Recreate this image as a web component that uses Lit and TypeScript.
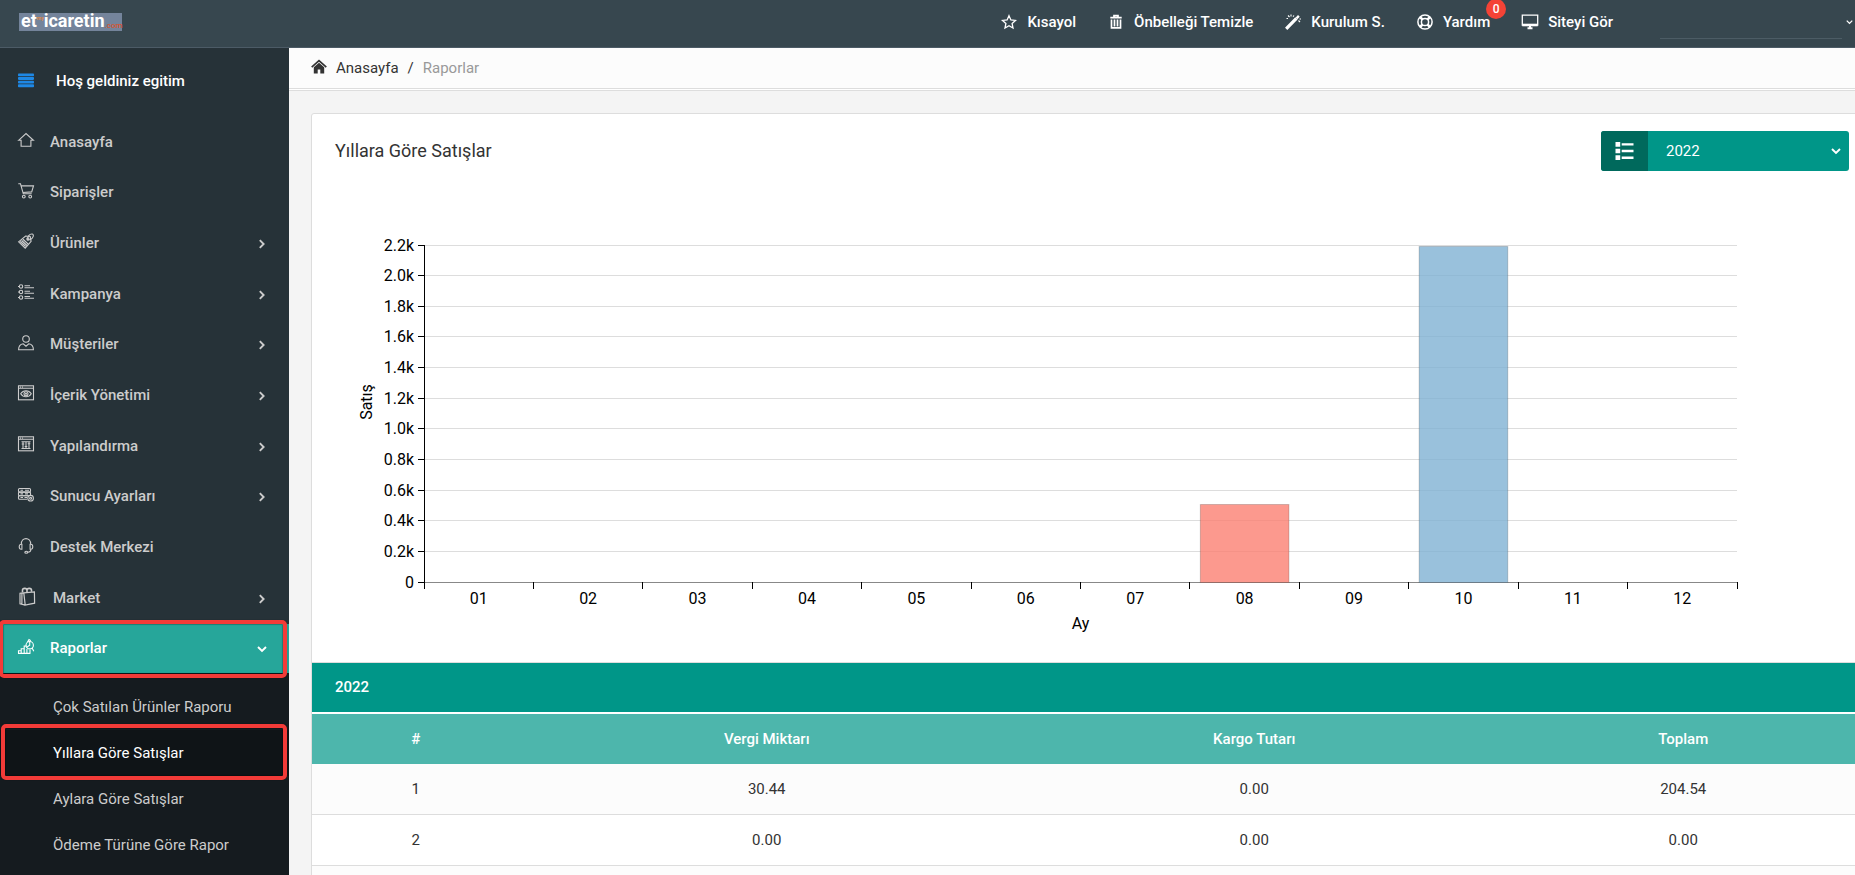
import { LitElement, html, svg, css, nothing, TemplateResult, SVGTemplateResult } from 'lit';
import { customElement, property } from 'lit/decorators.js';
import { classMap } from 'lit/directives/class-map.js';

const ICONS: Record<string, SVGTemplateResult> = {
  bars: svg`<g fill="currentColor" stroke="none"><rect y="1.4" width="16" height="2.900" rx=".8"/><rect y="5" width="16" height="2.900" rx=".8"/><rect y="8.700" width="16" height="2.900" rx=".8"/><rect y="12.300" width="16" height="2.900" rx=".8"/></g>`,
  home: svg`<path d="M.6 8.3 8 1.6l7.400 6.700h-2.500v5.900H3.100V8.300z"/>`,
  cart: svg`<path d="M.3.8h2.200l2.800 10h8.400M3.200 2.900h12.300l-1.800 6-8.900.6"/><circle cx="5.800" cy="13.600" r="1.400"/><circle cx="12.200" cy="13.600" r="1.400"/>`,
  tag: svg`<path d="M.6 8.900 7.600 3l4.600.5.9 4.800-5.900 6.900z"/><path d="m2.200 8.600 5.400 5M3.600 7.400l5.400 5M5 6.200l5.200 4.900" stroke-width="1.300"/><path d="M9.600 6.600c-.6-2.900 2-6 4.700-5.600 2.200.7.600 4.600-1.800 5.400-1.500.5-2.900.4-2.900.2z"/><circle cx="9.900" cy="6" r="1.100"/>`,
  list: svg`<circle cx="3" cy="2.500" r="1.700"/><circle cx="3" cy="8" r="1.700"/><circle cx="3" cy="13.500" r="1.700"/><path d="M0 2.500h1.200M0 8h1.200M0 13.500h1.200M6.500 1.800H12M6.500 3.800H16M6.500 7.200H12M6.500 9.200H16M6.500 12.500H12M6.500 14.200H16"/>`,
  user: svg`<circle cx="8" cy="4" r="3.300"/><path d="M.6 14.700c0-3.400 2-5.500 4.600-5.900L8 11.200l2.800-2.400c2.600.4 4.600 2.500 4.600 5.900z"/>`,
  eye: svg`<rect x=".5" y=".8" width="15" height="14"/><path d="M.5 3.300h15M2 2h1M4 2h1" /><path d="M2.700 8.800c2.600-4 8-4 10.600 0-2.600 4-8 4-10.600 0z"/><circle cx="8" cy="8.800" r="2"/><circle cx="8" cy="8.800" r=".5"/>`,
  sliders: svg`<rect x=".5" y=".8" width="15" height="14"/><path d="M.5 3.300h15M2 2h1M4 2h1M3.500 5.800h9M3.500 12.500h9M5 6v6.500M8 6v6.500M11 6v6.500M3.700 8h2.600M6.700 10.500h2.600M9.700 7.800h2.600"/>`,
  server: svg`<rect x=".5" y="1.500" width="12" height="3.600" rx="1"/><rect x=".5" y="5.100" width="12" height="3.600" rx="1"/><path d="M9 12.300H1.500a1 1 0 0 1-1-1V9.700a1 1 0 0 1 1-1H10M2.500 3.300H5M7 3.300h4M2.500 6.900H5M7 6.900h3M2.500 10.500H5M6.500 10.500H9"/><circle cx="12.600" cy="11.200" r="2.800"/><circle cx="12.600" cy="11.200" r="1"/>`,
  headset: svg`<path d="M3.300 6.200C3.300-1.300 12.700-1.300 12.700 6.200M3.900 6.300H3.100C.6 6.300.6 11.200 3.100 11.200h.8zM12.100 6.300h.8c2.500 0 2.500 4.900 0 4.900h-.8zM12.900 11.300c0 2-1.400 3-3.400 3"/><ellipse cx="8.300" cy="14.300" rx="1.500" ry="1"/>`,
  bag: svg`<path d="M4.800 4.300 15.400 3.500l.2 11.200-9.400 1.900zM4.800 4.300 1 4.700v10.600l5.200 1.300M2.900 4.600v11" stroke-width="1.200"/><path d="M3.500 4V1.700C3.500-.8 8-.8 8 1.700v2M8 1.700C8-.8 12.500-.8 12.500 1.700v1.600" stroke-width="1.600"/>`,
  chart: svg`<path d="M.5 14.400v-2.600h2.700M3.200 14.400V9.700h3M6.200 14.400V7h2.500M8.900 14.400V9.900M12 14.400v-3.600M0 14.400h12.400"/><circle cx="11.700" cy="6.200" r="3.700"/><path d="M11.700 2.500v3.700l-3 2M14.100 9l1.700 3.300M9.500 3 11 .6l1.800 1.200"/>`,
  star: svg`<path d="m8 1.700 1.900 4.200 4.600.5-3.400 3.100.9 4.500L8 11.700 4 14l.9-4.500L1.500 6.400l4.600-.5z" stroke-width="1.300"/>`,
  trash: svg`<path d="M2.300 3.600h11.400M6 3.300V1.700h4v1.600" stroke-width="1.700"/><path d="M3.500 5.500v8.300h9V5.500M6.500 5.500v7M9.500 5.500v7" stroke-width="1.700"/>`,
  wand: svg`<path d="m2.300 13.700 8-8.200" stroke-width="3.200" stroke-linecap="square"/><path d="m11.500 4.300 2.400-2.500" stroke-width="2.400"/><path d="M3 1.500l1.500 1.500M6 .5v2M1.500 4.500h1.500M9 1.500 8 2.700M13.500 6.500l1.500 1.500M14.500 5H16" stroke-width="1.100"/>`,
  help: svg`<circle cx="8" cy="8" r="7.100" stroke-width="1.500"/><circle cx="8" cy="8" r="3.600" stroke-width="1.500"/><path d="m2.900 2.900 2.700 2.700M13.100 2.900l-2.700 2.700M2.900 13.100l2.700-2.700M13.100 13.100l-2.700-2.700" stroke-width="2.600"/>`,
  monitor: svg`<path d="M.3 1.200h15.400v10H.3z" stroke-width="1.300"/><path d="M.3 11h15.400" stroke-width="2.600"/><path d="M5.500 14.300h5M8 12v2.400" stroke-width="2"/>`,
  house: svg`<g fill="currentColor" stroke="none"><path d="M8 3.700 2.800 8.300v6.200h3.900v-3.900h2.600v3.900h3.900V8.300z"/></g><path d="M.7 8.200 8 1.700l7.300 6.500" stroke-width="1.700"/>`,
  rows: svg`<g fill="currentColor" stroke="none"><path d="M0 0h4.200v4.200H0zM0 5.900h4.200v4.200H0zM0 11.800h4.200V16H0zM5.500 1h10.500v2.200H5.500zM5.500 6.900h10.500v2.200H5.500zM5.500 12.800h10.500V15H5.500z"/></g>`,
  right: svg`<path d="m5.800 4.200 3.800 3.800-3.800 3.800" stroke-width="1.900"/>`,
  down: svg`<path d="M4 6 8 10l4-4" stroke-width="1.900"/>`,
};

@customElement('ui-icon')
class UiIcon extends LitElement {
  static styles = css`
    :host { display: block; flex: none; width: 16px; height: 16px; }
    svg { display: block; width: 100%; height: 100%; overflow: visible; }
  `;
  @property() name = '';
  render() {
    return html`<svg viewBox="0 0 16 16" fill="none" stroke="currentColor" stroke-width="1.1" aria-hidden="true">${ICONS[this.name]}</svg>`;
  }
}

interface Bar { month: string; value: number; tone: string }

@customElement('sales-chart')
class SalesChart extends LitElement {
  static styles = css`
    :host { display: block; padding: 57px 135px 79px 112px; }
    svg { display: block; width: 100%; height: 338px; overflow: visible; font: 16px Roboto, sans-serif; }
    .grid { stroke: #ddd; }
    .axis { stroke: #000; }
    .base { stroke: #888; }
    .lines { shape-rendering: crispEdges; }
    .end { text-anchor: end; }
    .mid { text-anchor: middle; }
    .bar { stroke: rgba(0, 0, 0, 0.18); fill-opacity: 0.8; }
    .red { fill: #fb8072; }
    .blue { fill: #80b1d3; }
  `;
  @property({ attribute: false }) bars: Bar[] = [];

  render() {
    const max = 2200;
    const height = 337;
    const n = this.bars.length;
    const ticks = Array.from({ length: 12 }, (_, i) => i * 200);
    const y = (v: number) => Math.floor(height - (v / max) * height) + 0.5;
    const x = (i: number) => `${(i / n) * 100}%`;
    return html`<svg role="img" aria-label="Yıllara Göre Satışlar">
      <g class="lines">
        ${ticks.map((t) => svg`<line class="grid" x1="0" x2="100%" y1=${y(t)} y2=${y(t)} />
          <line class="axis" x1="-6" x2="0" y1=${y(t)} y2=${y(t)} />`)}
        <line class="base" x1="0" x2="100%" y1=${y(0)} y2=${y(0)} />
        <line class="axis" x1="0.5" x2="0.5" y1="0" y2=${height} />
        ${Array.from({ length: n + 1 }, (_, i) => svg`<line class="axis" x1=${x(i)} x2=${x(i)} y1=${height} y2=${height + 7} />`)}
      </g>
      ${this.bars.map((b, i) => svg`
        ${b.value ? svg`<rect class="bar ${b.tone}" x=${x(i + 0.095)} width=${x(0.81)} y=${y(b.value)} height=${height + 0.5 - y(b.value)} />` : nothing}
        <text class="mid" x=${x(i + 0.5)} y=${height + 22}>${b.month}</text>`)}
      ${ticks.map((t) => svg`<text class="end" x="-10" y=${y(t) + 5}>${t ? (t / 1000).toFixed(1) + 'k' : '0'}</text>`)}
      <text class="mid" x="50%" y="384">Ay</text>
      <text class="mid" transform="translate(-52 157) rotate(-90)">Satış</text>
    </svg>`;
  }
}

const MENU = [
  { icon: 'home', label: 'Anasayfa' },
  { icon: 'cart', label: 'Siparişler' },
  { icon: 'tag', label: 'Ürünler', more: true },
  { icon: 'list', label: 'Kampanya', more: true },
  { icon: 'user', label: 'Müşteriler', more: true },
  { icon: 'eye', label: 'İçerik Yönetimi', more: true },
  { icon: 'sliders', label: 'Yapılandırma', more: true },
  { icon: 'server', label: 'Sunucu Ayarları', more: true },
  { icon: 'headset', label: 'Destek Merkezi' },
  { icon: 'bag', label: 'Market', more: true },
  { icon: 'chart', label: 'Raporlar', more: true, open: true },
];
const REPORTS = ['Çok Satılan Ürünler Raporu', 'Yıllara Göre Satışlar', 'Aylara Göre Satışlar', 'Ödeme Türüne Göre Rapor'];
const ACTIVE_REPORT = 1;
const ACTIONS = [
  { icon: 'star', label: 'Kısayol' },
  { icon: 'trash', label: 'Önbelleği Temizle' },
  { icon: 'wand', label: 'Kurulum S.' },
  { icon: 'help', label: 'Yardım', badge: '0' },
  { icon: 'monitor', label: 'Siteyi Gör' },
];
const BARS: Bar[] = Array.from({ length: 12 }, (_, i) => ({
  month: String(i + 1).padStart(2, '0'),
  value: i === 7 ? 504 : i === 9 ? 2192 : 0,
  tone: i === 7 ? 'red' : 'blue',
}));
const COLUMNS = ['#', 'Vergi Miktarı', 'Kargo Tutarı', 'Toplam'];
const ROWS = [
  ['1', '30.44', '0.00', '204.54'],
  ['2', '0.00', '0.00', '0.00'],
  ['', '', '', ''],
];

@customElement('app-root')
class AppRoot extends LitElement {
  static styles = css`
    :host {
      display: grid;
      grid-template: 48px minmax(0, 1fr) / 289px minmax(0, 1fr);
      height: 100vh;
      overflow: hidden;
      font: 15px/20px Roboto, sans-serif;
      color: #333;
      background: #f4f4f4;
    }
    *, *::before { box-sizing: border-box; }
    a { color: inherit; text-decoration: none; }
    ul { list-style: none; margin: 0; padding: 0; }
    select { appearance: none; border: 0; outline: 0; font: inherit; color: inherit; background: none; }

    .top {
      grid-column: 1 / -1;
      display: flex;
      align-items: center;
      padding-left: 19px;
      color: #fff;
      background: #37474f;
      border-bottom: 1px solid #4c5b66;
    }
    .logo {
      display: flex;
      align-items: flex-end;
      width: 103px;
      height: 18px;
      padding-left: 2px;
      margin-bottom: 3px;
      background: #74849b;
      font-size: 18px;
      font-weight: 700;
      line-height: 20px;
    }
    .logo sup { align-self: flex-start; padding-top: 1px; font-size: 5px; line-height: 8px; color: #e08a4a; }
    .logo small { font-size: 8px; font-weight: 500; line-height: 10px; color: #d9532c; }
    .actions { display: flex; gap: 32px; margin: 0 47px 3px auto; font-weight: 500; }
    .action { display: flex; align-items: center; gap: 10px; position: relative; }
    .badge {
      position: absolute;
      right: -16px;
      top: -13px;
      width: 20px;
      height: 20px;
      border-radius: 50%;
      background: #f44336;
      font-size: 12px;
      text-align: center;
    }
    .account { display: flex; align-items: center; gap: 2px; margin-bottom: 3px; }
    .account select { width: 182px; height: 33px; border-bottom: 1px solid #4c5c65; }
    .account ui-icon { width: 11px; }

    .side { background: #263238; color: #ccc; font-weight: 500; }
    .welcome { display: flex; align-items: center; gap: 22px; height: 66px; padding-left: 18px; color: #fff; }
    .welcome ui-icon { color: #1e88e5; margin-bottom: 3px; }
    .menu { display: flex; flex-direction: column; justify-content: space-between; height: 556px; margin-top: 3px; }
    .item { display: flex; align-items: center; gap: 16px; height: 49px; padding: 0 19px 0 18px; }
    .item ui-icon { margin-bottom: 3px; }
    .item .arrow { margin: 2px 0 0 auto; }
    .item.wide { gap: 18px; padding-left: 19px; }
    .item.wide ui-icon:first-child { height: 17px; }
    .open { position: relative; background: #26a69a; color: #fff; }
    .sub { height: 100%; padding-top: 11px; background: #151b1f; font-weight: 400; }
    .sub a { display: flex; align-items: center; height: 46px; padding-left: 53px; }
    .sub .active { position: relative; background: #0f1417; color: #fff; }
    .open::before, .active::before {
      content: '';
      position: absolute;
      inset: -4px 2px -5px 0;
      border: 4px solid #f33b38;
      border-radius: 5px;
      box-shadow: inset 0 0 1px 1px rgba(0, 0, 0, 0.25), 0 0 1px rgba(0, 0, 0, 0.5);
    }
    .open::before { left: -1px; }
    .active::before { inset: -6px 2px -4px 1px; }

    .crumbs {
      display: flex;
      align-items: center;
      gap: 9px;
      height: 41px;
      padding-left: 22px;
      background: #fcfcfc;
      border-bottom: 1px solid #ddd;
      box-shadow: 0 1px #fff, 0 2px #ddd;
    }
    .crumbs ui-icon { margin-bottom: 3px; }
    .crumbs .here { color: #999; }

    .main { overflow: hidden; }
    .panel { margin: 24px -18px 0 22px; background: #fff; border: 1px solid #ddd; border-radius: 3px; }
    .head { display: flex; align-items: center; justify-content: space-between; padding: 17px 23px; }
    h1 { margin: 0; font-size: 18px; font-weight: 400; line-height: 24px; }
    .year { display: flex; align-items: center; height: 40px; border-radius: 3px; overflow: hidden; background: #009688; color: #fff; position: relative; }
    .year .mark { display: grid; place-items: center; width: 47px; height: 100%; background: #00695c; }
    .year .mark ui-icon { width: 19px; height: 18px; }
    .year select { width: 201px; height: 100%; padding: 0 18px; }
    .year .arrow { position: absolute; right: 5px; pointer-events: none; }

    table { width: 100%; table-layout: fixed; border-spacing: 0; border-top: 1px solid #ddd; text-align: center; }
    th { padding: 0; font-weight: 500; color: #fff; background: #4db6ac; height: 50px; }
    th.title { height: 51px; padding: 0 0 2px 23px; text-align: left; background: #009688; border-bottom: 2px solid #fff; }
    td { padding: 0; height: 51px; border-bottom: 1px solid #ddd; }
    tbody tr:nth-child(odd) { background: #fcfcfc; }
    .c0 { width: 13.3%; }
    .c1 { width: 31.7%; }
    .c2 { width: 30.8%; }
    .c3 { width: 24.2%; }
  `;

  private menuItem(m: (typeof MENU)[number]): TemplateResult {
    return html`<li><a href="#" class=${classMap({ item: true, open: !!m.open, wide: m.icon === 'bag' })}>
      <ui-icon name=${m.icon}></ui-icon>${m.label}
      ${m.more ? html`<ui-icon class="arrow" name=${m.open ? 'down' : 'right'}></ui-icon>` : nothing}
    </a></li>`;
  }

  render() {
    return html`
      <header class="top">
        <a class="logo" href="#">et<sup>my</sup>icaretin<small>.com</small></a>
        <nav class="actions">
          ${ACTIONS.map((a) => html`<a class="action" href="#"><ui-icon name=${a.icon}></ui-icon>${a.label}
            ${a.badge ? html`<span class="badge">${a.badge}</span>` : nothing}</a>`)}
        </nav>
        <label class="account"><select aria-label="Hesap"><option></option></select><ui-icon name="down"></ui-icon></label>
      </header>
      <aside class="side">
        <div class="welcome"><ui-icon name="bars"></ui-icon>Hoş geldiniz egitim</div>
        <ul class="menu">${MENU.map((m) => this.menuItem(m))}</ul>
        <ul class="sub">
          ${REPORTS.map((r, i) => html`<li><a href="#" class=${classMap({ active: i === ACTIVE_REPORT })}>${r}</a></li>`)}
        </ul>
      </aside>
      <main class="main">
        <nav class="crumbs">
          <ui-icon name="house"></ui-icon><a href="#">Anasayfa</a><span>/</span><span class="here">Raporlar</span>
        </nav>
        <section class="panel">
          <div class="head">
            <h1>Yıllara Göre Satışlar</h1>
            <label class="year">
              <span class="mark"><ui-icon name="rows"></ui-icon></span>
              <select aria-label="Yıl"><option>2022</option></select>
              <ui-icon class="arrow" name="down"></ui-icon>
            </label>
          </div>
          <sales-chart .bars=${BARS}></sales-chart>
          <table>
            <colgroup>${COLUMNS.map((_, i) => html`<col class="c${i}">`)}</colgroup>
            <thead>
              <tr><th class="title" colspan="4">2022</th></tr>
              <tr>${COLUMNS.map((c) => html`<th scope="col">${c}</th>`)}</tr>
            </thead>
            <tbody>${ROWS.map((r) => html`<tr>${r.map((c) => html`<td>${c}</td>`)}</tr>`)}</tbody>
          </table>
        </section>
      </main>
    `;
  }
}
